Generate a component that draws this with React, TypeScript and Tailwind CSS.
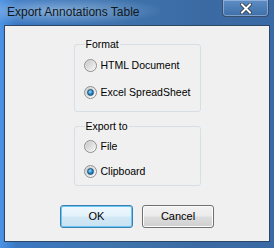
import React from 'react';

function Radio({ checked }: { checked?: boolean }) {
  return (
    <span className="relative flex h-[13px] w-[13px] shrink-0 items-center justify-center rounded-full border border-[#8c8f92] bg-[linear-gradient(135deg,#d4d4d4,#fbfbfb)]">
      <span className="h-[9px] w-[9px] rounded-full bg-[linear-gradient(135deg,#c9c9c9,#f4f4f4)]" />
      {checked && (
        <span className="absolute h-[7px] w-[7px] rounded-full border border-[#1d4d76] bg-[radial-gradient(circle_at_40%_35%,#9ad9f8,#1f84c6_55%,#0f5d94)]" />
      )}
    </span>
  );
}

function Option({ label, checked }: { label: string; checked?: boolean }) {
  return (
    <label className="flex items-center gap-[4px] leading-[13px] text-[#000]">
      <Radio checked={checked} />
      <span>{label}</span>
    </label>
  );
}

function Group({ title, children, height }: { title: string; children: React.ReactNode; height: string }) {
  return (
    <fieldset className={`w-[127px] ${height} rounded-[3px] border border-[#d5dfe5] pl-[9px] pr-2`}>
      <legend className="ml-[1px] px-[1px] leading-[13px]">{title}</legend>
      {children}
    </fieldset>
  );
}

export default function App() {
  return (
    <div className="flex h-[248px] w-[274px] flex-col bg-[linear-gradient(90deg,#4b93e6_0%,#3a78c2_6%,#3f74ad_40%,#3b6aa3_75%,#3a6aa6_100%)] font-['Liberation_Sans',Arial,sans-serif]">
      {/* title bar */}
      <div className="relative flex h-[25px] shrink-0 items-start">
        <div className="absolute left-0 top-0 h-[24px] w-[160px] bg-[radial-gradient(ellipse_at_35%_45%,rgba(190,215,240,0.55),rgba(150,185,225,0.2)_55%,transparent_75%)]" />
        <span className="relative ml-[7px] mt-[5px] text-[12px] leading-[14px] text-[#101820]">
          Export Annotations Table
        </span>
        <div className="ml-auto mr-[5px] flex h-[17px] w-[47px] items-center justify-center rounded-b-[4px] border border-t-0 border-[#3a4f6c] bg-[linear-gradient(180deg,#5d8dc4,#3f6fa8)] shadow-[inset_0_0_0_1px_rgba(200,220,245,0.45)]">
          <svg width="12" height="11" viewBox="0 0 12 11">
            <path d="M2 1.5 L10 9.5 M10 1.5 L2 9.5" stroke="#2a3340" strokeWidth="3.6" strokeLinecap="square" />
            <path d="M2 1.5 L10 9.5 M10 1.5 L2 9.5" stroke="#ffffff" strokeWidth="2" strokeLinecap="square" />
          </svg>
        </div>
      </div>

      {/* client */}
      <div className="mx-[4px] mb-[6px] flex flex-1 flex-col items-center border border-[#2c4666] bg-[#f0f0f0] text-[10.5px]">
        <div className="mt-[12px] flex flex-col items-center gap-[8px]">
          <Group title="Format" height="h-[74px]">
            <div className="flex flex-col gap-[14px] pt-[8px]">
              <Option label="HTML Document" />
              <Option label="Excel SpreadSheet" checked />
            </div>
          </Group>
          <Group title="Export to" height="h-[66px]">
            <div className="flex flex-col gap-[12px] pt-[7px]">
              <Option label="File" />
              <Option label="Clipboard" checked />
            </div>
          </Group>
        </div>

        <div className="mt-[19px] flex gap-[9px] text-[11px]">
          <button className="h-[23px] w-[73px] rounded-[3px] border border-[#3c7fb1] bg-[linear-gradient(180deg,#eef8fd_0%,#e3f2fb_48%,#d2e8f5_52%,#c9e2f1_100%)] shadow-[inset_0_0_0_1px_#68c8f3]">
            OK
          </button>
          <button className="h-[23px] w-[72px] rounded-[3px] border border-[#707070] bg-[linear-gradient(180deg,#f2f2f2_0%,#ebebeb_48%,#dddddd_52%,#cfcfcf_100%)] shadow-[inset_0_0_0_1px_#fcfcfc]">
            Cancel
          </button>
        </div>
      </div>
    </div>
  );
}
